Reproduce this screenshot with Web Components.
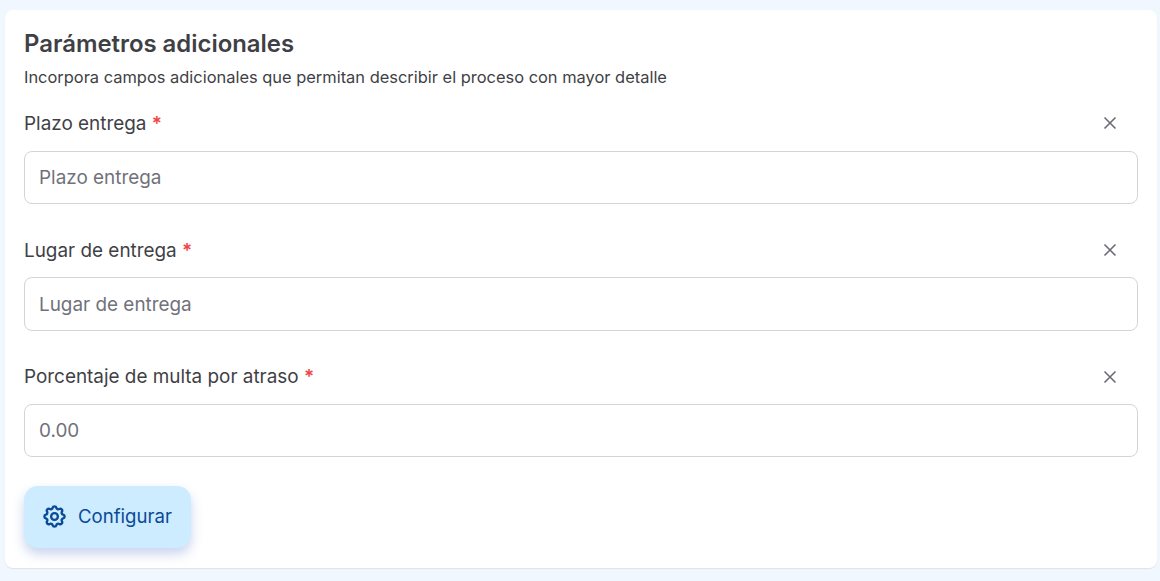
<!DOCTYPE html>
<html lang="es">
<head>
<meta charset="utf-8">
<title>Parámetros adicionales</title>
<style>
  html, body { margin: 0; height: 100%; }
  body { background: #f0f7ff; font-family: Inter, "Noto Sans", sans-serif; color: #3f3f46; overflow: hidden; }
</style>
</head>
<body>
<params-card heading="Parámetros adicionales" sub="Incorpora campos adicionales que permitan describir el proceso con mayor detalle">
  <param-field label="Plazo entrega" placeholder="Plazo entrega"></param-field>
  <param-field label="Lugar de entrega" placeholder="Lugar de entrega"></param-field>
  <param-field label="Porcentaje de multa por atraso" placeholder="0.00"></param-field>
  <config-button slot="footer">Configurar</config-button>
</params-card>
<script>
class ParamsCard extends HTMLElement{
  constructor(){
    super();
    const el = this.attachShadow({mode:'open'})
    el.innerHTML = `
    <style>
      :host{
        display:block;
        box-sizing:border-box;
        width:1152px;
        height:558px;
        margin:10px 0 0 5px;
        padding:19px 19px 0 19px;
        background:#fff;
        border-radius:8px;
        box-shadow:0 1px 1px #dfe3e8;
      }
      h2{ margin:0; font-size:23.9px; line-height:30px; font-weight:600; color:#3f3f46; }
      p{ margin:6px 0 0; font-size:16.43px; line-height:24px; color:#3f3f46; }
      .fields{ display:flex; flex-direction:column; gap:26.33px; margin-top:14.7px; }
      .footer{ margin-top:29px; }
    </style>
    <h2>${this.getAttribute('heading')}</h2>
    <p>${this.getAttribute('sub')}</p>
    <div class="fields"><slot></slot></div>
    <div class="footer"><slot name="footer"></slot></div>`
  }
}
class ParamField extends HTMLElement{
  constructor(){
    super();
    const el = this.attachShadow({mode:'open'})
    el.innerHTML = `
    <style>
      :host{ display:block; }
      .top{ display:flex; justify-content:space-between; align-items:center; height:40px; margin-bottom:7px; }
      label{ font-size:18.9px; line-height:26px; padding-top:.8px; color:#3f3f46; }
      .req{ color:#ef4444; font-weight:600; }
      button{ all:unset; display:flex; width:40px; height:40px; align-items:center; justify-content:center; margin-right:8px; }
      svg{ display:block; margin-bottom:1px; }
      input{
        display:block; box-sizing:border-box; width:100%; height:53.33px;
        padding:0 14px; border:1px solid #d4d4d8; border-radius:8px;
        font:400 18.9px Inter, "Noto Sans", sans-serif; color:#3f3f46; background:#fff; outline:none;
      }
      input::placeholder{ color:#71717a; opacity:1; }
    </style>
    <div class="top">
      <label>${this.getAttribute('label')} <span class="req">*</span></label>
      <button aria-label="Quitar">
        <svg width="14" height="14" viewBox="0 0 14 14" fill="none" stroke="#6b6b76" stroke-width="1.6"><path d="M1.5 1.5l11 11M12.5 1.5l-11 11"/></svg>
      </button>
    </div>
    <input type="text" placeholder="${this.getAttribute('placeholder')}">`
  }
}
class ConfigButton extends HTMLElement{
  constructor(){
    super();
    const el = this.attachShadow({mode:'open'})
    el.innerHTML = `
    <style>
      :host{
        display:inline-flex; box-sizing:border-box; align-items:center; gap:10px;
        width:167px; height:62px; padding:0 17px;
        background:#cdecff; color:#0b4a96; border-radius:14px;
        font-size:18.6px; box-shadow:0 6px 12px rgba(60,100,190,.28);
      }
      svg{ display:block; flex:none; margin-bottom:2px; }
      span{ margin-bottom:2px; }
    </style>
    <svg width="27" height="27" viewBox="0 0 24 24" fill="none" stroke="#0b4a96" stroke-width="2.1" stroke-linecap="round" stroke-linejoin="round">
      <path d="M10.325 4.317c.426-1.756 2.924-1.756 3.35 0a1.724 1.724 0 0 0 2.573 1.066c1.543-.94 3.31.826 2.37 2.37a1.724 1.724 0 0 0 1.065 2.572c1.756.426 1.756 2.924 0 3.35a1.724 1.724 0 0 0-1.066 2.573c.94 1.543-.826 3.31-2.37 2.37a1.724 1.724 0 0 0-2.572 1.065c-.426 1.756-2.924 1.756-3.35 0a1.724 1.724 0 0 0-2.573-1.066c-1.543.94-3.31-.826-2.37-2.37a1.724 1.724 0 0 0-1.065-2.572c-1.756-.426-1.756-2.924 0-3.35a1.724 1.724 0 0 0 1.066-2.573c-.94-1.543.826-3.31 2.37-2.37 1 .608 2.296.07 2.572-1.065z"/>
      <circle cx="12" cy="12" r="3"/>
    </svg>
    <span><slot></slot></span>`
  }
}
customElements.define('params-card', ParamsCard)
customElements.define('param-field', ParamField)
customElements.define('config-button', ConfigButton)
</script>
</body>
</html>
